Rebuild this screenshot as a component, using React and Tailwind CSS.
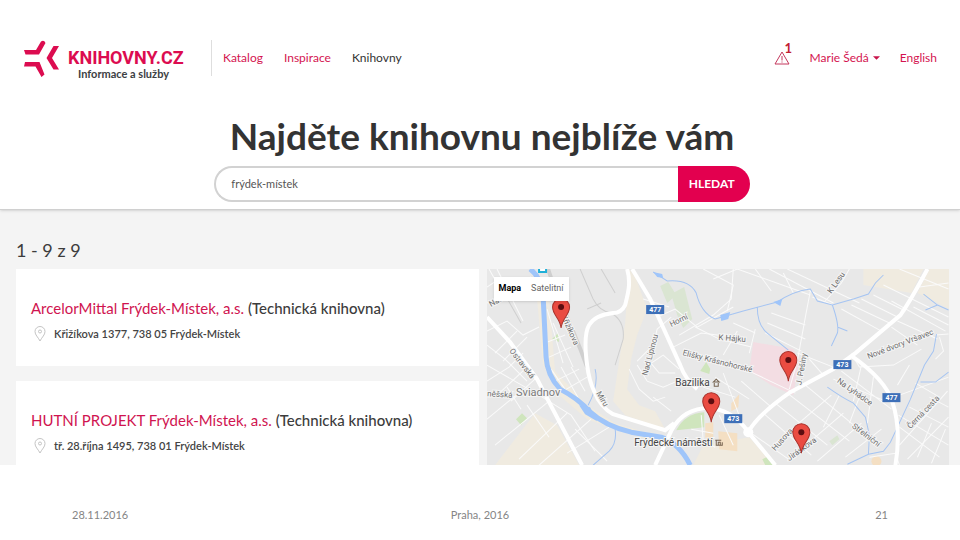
import React, { useState } from "react";

const libraries = [
  {
    name: "ArcelorMittal Frýdek-Místek, a.s.",
    type: "(Technická knihovna)",
    address: "Křižíkova 1377, 738 05 Frýdek-Místek",
  },
  {
    name: "HUTNÍ PROJEKT Frýdek-Místek, a.s.",
    type: "(Technická knihovna)",
    address: "tř. 28.října 1495, 738 01 Frýdek-Místek",
  },
];

// street grid, thin white lines
const streets = [
  "M0 18 L12 10 M2 0 L20 32 M10 0 L36 52 M0 34 L44 8",
  "M0 62 L20 52 L36 66 L52 58 M8 84 L30 62 M16 92 L40 68",
  "M0 76 L18 90 L40 112 M0 96 L52 126 L84 146 L108 182",
  "M0 112 L22 98 L36 84 M8 128 L40 98 M24 132 L50 108",
  "M60 40 L76 94 M66 54 L86 98 M58 74 L78 66 M62 88 L84 78",
  "M64 100 L82 126 M74 98 L94 134 M84 98 L98 122 M68 112 L92 100 M76 122 L100 108",
  "M0 150 L34 122 M8 176 L62 132 M32 190 L80 144 M52 196 L104 150",
  "M20 118 L34 140 M40 136 L62 168 M88 160 L120 192 M80 184 L122 158",
  "M156 30 L182 38 M170 48 L188 40 L210 58 L246 38",
  "M150 92 L166 76 L170 60 L184 48 M158 98 L176 86 L192 100",
  "M142 100 L152 120 L166 132 L178 128 M150 96 L160 112 L176 118 L190 112",
  "M162 92 L172 104 L188 104 M166 128 L184 142",
  "M192 66 L226 46 L244 30 L246 0 M186 78 L214 64 L246 68",
  "M208 58 L232 70 L264 78 M200 84 L232 92 L262 102 L308 124",
  "M216 0 L246 16 L240 42 M226 10 L250 0 M250 0 L323 26",
  "M282 0 L346 34 M300 0 L372 34 M268 0 L284 22 M296 4 L306 24",
  "M323 22 L318 48 L310 92 L302 120 M336 34 L354 14 L362 0",
  "M325 28 L346 36 M284 44 L318 56 M280 54 L318 70 M278 64 L314 82",
  "M250 62 L236 86 M268 60 L262 84 M246 54 L268 64",
  "M354 40 L394 62 M364 36 L402 54 M374 30 L410 48 M386 26 L418 42",
  "M396 16 L461 48 M404 32 L458 62 M410 52 L450 70 M404 58 L430 76",
  "M412 0 L461 20 M432 18 L461 14 M426 38 L461 56",
  "M366 88 L372 98 L406 96 L434 80 M448 66 L461 65 M452 68 L456 82 L448 90",
  "M310 84 L346 98 M322 90 L336 106 M254 112 L284 138",
  "M228 108 L262 130 M236 104 L254 152 M216 118 L248 128",
  "M276 144 L324 186 M288 134 L340 176 M300 124 L362 172 M318 116 L376 164",
  "M264 164 L304 192 M300 192 L356 144 M286 176 L344 126 M330 192 L374 154",
  "M346 110 L398 132 M354 102 L404 140 M372 128 L362 154",
  "M374 96 L366 132 M386 108 L380 154 M352 126 L336 158",
  "M410 116 L422 96 M412 126 L461 108 M412 176 L460 122 M420 190 L461 148",
  "M411 146 L461 176 M412 158 L452 188 M422 138 L461 158 M442 128 L461 138",
  "M428 114 L452 128 M430 188 L444 154 M444 194 L458 160",
  "M382 188 L408 184 L412 196 M358 188 L394 160",
  "M214 146 L216 172 L228 178 M232 146 L246 176 M204 160 L226 164",
];

const mainRoads = [
  "M140 0 C144 14 141 24 138 36 Q134 44 126 44 Q108 46 102 56 Q96 66 100 96 Q102 112 107 122 Q113 138 126 145 L178 161 L187 154",
  "M145 0 L163 30 L193 96 Q198 110 210 120",
  "M0 48 L23 73 L50 110 L95 196",
  "M168 196 L182 166 Q192 142 216 139 Q244 138 261 163 L288 196",
  "M261 163 Q270 146 303 123 L346 100 L368 84 L413 46 Q424 30 440 0",
  "M363 86 Q398 110 405 133 Q414 160 408 196",
];

const streams = [
  "M166 3 L180 12 Q202 10 209 24 Q214 44 228 50 L242 46 L256 42 L290 33 Q306 22 323 20 L330 32 L345 36 L366 30 L381 25 L388 14 L396 6",
  "M345 36 Q352 56 350 64 L344 77 M350 58 L360 62",
  "M270 38 Q270 56 280 64 L301 81",
  "M436 25 L450 36 L461 41 M450 36 L438 41",
  "M449 65 L446 82 L437 96 L423 130 L403 173 L396 182 L381 185 L360 195",
  "M340 118 Q354 128 366 134 L378 148 L382 166 L381 185",
  "M433 113 L448 113 L461 103",
  "M128 160 Q130 174 122 182 L106 196 M108 100 Q112 116 101 136",
];

const labels = [
  { text: "Nasl.", x: 4, y: 38, rotate: -30 },
  { text: "Ostravská", x: 22, y: 82, rotate: 52 },
  { text: "Křižíkova", x: 74, y: 47, rotate: 66 },
  { text: "Nad Lipinou", x: 160, y: 107, rotate: -75 },
  { text: "Horní", x: 184, y: 58, rotate: -26 },
  { text: "Elišky Krásnohorské", x: 195, y: 86, rotate: 14 },
  { text: "K Hájku", x: 231, y: 71, rotate: 4 },
  { text: "K Lesu", x: 344, y: 25, rotate: -55 },
  { text: "Nové dvory Vršavec", x: 381, y: 90, rotate: -21 },
  { text: "J. Pešiny", x: 314, y: 116, rotate: -80 },
  { text: "Na Lyhádce", x: 349, y: 113, rotate: 35 },
  { text: "Černá cesta", x: 423, y: 160, rotate: -46 },
  { text: "Střelniční", x: 364, y: 158, rotate: 37 },
  { text: "Husova", x: 288, y: 182, rotate: -48 },
  { text: "Jiráskova", x: 302, y: 192, rotate: -36 },
  { text: "Míru", x: 109, y: 124, rotate: 60 },
  { text: "něšská", x: 0, y: 127, rotate: 4 },
];

const shields = [
  { text: "477", x: 168, y: 41 },
  { text: "473", x: 355, y: 96 },
  { text: "477", x: 404, y: 129 },
  { text: "473", x: 246, y: 150 },
];

const markers = [
  { x: 74, y: 59 },
  { x: 301, y: 112 },
  { x: 224, y: 153 },
  { x: 314, y: 184 },
];

const LogoMark = () => (
  <svg viewBox="0 0 36 38" className="h-[38px] w-9 shrink-0" fill="#dc0c50">
    <path d="M17 1.500 Q20 -0.500 21.500 3 L15 14.500 L1.500 14.500 L0 10 L12 10 Z" />
    <path d="M1 22 L15.500 22 L20.500 34.500 L17.500 37 L11.500 26.500 L0 26.500 Z" />
    <path d="M29.500 6 L35 6 L28 18 L35 29.500 L29.500 29.500 L22.500 18 Z" />
  </svg>
);

const PinIcon = () => (
  <svg
    viewBox="0 0 12 16"
    className="h-4 w-3 shrink-0"
    fill="none"
    stroke="#c4c4c4"
  >
    <path d="M6 15 C4 11 1 9 1 5.500 A5 5 0 0 1 11 5.500 C11 9 8 11 6 15 Z" />
    <circle cx="6" cy="5.500" r="1.500" />
  </svg>
);

const NavBar = () => (
  <header className="flex h-[76px] items-end pr-[23px] pl-6">
    <a href="#home" className="flex h-9 w-[187px] items-start">
      <LogoMark />
      <span className="flex flex-col pt-2 pl-2">
        <span className="font-['Roboto',sans-serif] text-lg leading-5 font-bold text-[#dc0c50]">
          KNIHOVNY.CZ
        </span>
        <span className="pl-[10px] text-[11px] leading-3 font-bold whitespace-nowrap text-[#3c4043]">
          Informace a služby
        </span>
      </span>
    </a>
    <nav className="flex h-9 items-center gap-[21px] border-l border-[#dedede] pl-[11px] text-xs text-[#d41450]">
      <a href="#katalog">Katalog</a>
      <a href="#inspirace">Inspirace</a>
      <a href="#knihovny" className="text-[#333]">
        Knihovny
      </a>
    </nav>
    <div className="ml-auto flex h-9 items-center gap-5 text-xs text-[#d41450]">
      <a href="#upozorneni" className="relative" aria-label="Upozornění">
        <svg
          viewBox="0 0 16 14"
          className="h-[14px] w-4"
          fill="none"
          stroke="#c4375c"
          strokeWidth="1"
        >
          <path d="M8 1 L15 13 L1 13 Z M8 5 L8 9.500 M8 10.500 L8 11.500" />
        </svg>
        <span className="absolute -top-[9px] left-[11px] text-[13px] leading-3 font-bold text-[#c22032]">
          1
        </span>
      </a>
      <button type="button" className="flex items-center gap-1">
        Marie Šedá
        <svg viewBox="0 0 8 4" className="h-1 w-[7px]" fill="#c8144b">
          <path d="M0 0 L8 0 L4 4 Z" />
        </svg>
      </button>
      <a href="#english">English</a>
    </div>
  </header>
);

const LibraryCard = ({ library }) => (
  <li className="h-[97px] bg-white pt-[29px] pl-[15px]">
    <h2 className="text-[15px] leading-5 font-medium text-[#3c3c3c]">
      <a href="#knihovna" className="font-normal text-[#d01450]">
        {library.name}
      </a>{" "}
      {library.type}
    </h2>
    <p className="mt-2 flex items-center gap-2 pl-[3px] text-[11px] leading-4 font-semibold text-[#444]">
      <PinIcon />
      {library.address}
    </p>
  </li>
);

const LibraryMap = () => (
  <svg
    viewBox="0 0 462 196"
    preserveAspectRatio="xMidYMin slice"
    className="h-full w-full font-['Roboto',sans-serif]"
  >
    <rect width="462" height="196" fill="#e8e8e8" />
    <g fill="#f0ebe0">
      <path d="M142 0 L149 10 L160 40 L150 66 L144 90 L140 120 L152 136 L168 142 L178 160 L138 146 L126 132 L132 92 L138 54 Z" />
      <path d="M376 0 L436 0 L424 24 L376 16 Z M442 0 L462 0 L462 40 L430 24 Z" />
      <path d="M8 196 L48 144 L70 156 L92 196 Z" />
      <path d="M50 30 L56 96 L72 126 L100 150 L176 176 L182 170 L128 154 L100 136 L68 102 L62 30 Z" />
      <path d="M216 176 L262 168 L286 196 L206 196 Z" />
    </g>
    <path
      d="M266 73 L306 80 L312 92 L306 126 L284 116 L262 102 Z"
      fill="#f3dde3"
    />
    <g fill="#cfe5bd">
      <path
        d="M173 17 L181 13 L189 26 L180 34 Z M184 25 L197 18 L205 50 L196 59 L190 46 Z"
        fill="#dae5d2"
      />
      <path d="M189 161 Q198 144 217 143 L217 158 Z" />
      <path d="M29 150 L35 144 L40 149 L34 156 Z M275 190 L281 187 L288 196 L278 196 Z" />
      <path d="M213 102 L219 93 L223 100 L222 105 Z M65 70 L71 64 L72 73 Z" />
      <path d="M342 172 L350 166 L352 170 L345 176 Z" fill="#dae5d2" />
    </g>
    <g fill="#f4dfc3">
      <path d="M218 154 L226 153 L226 176 L218 168 Z M231 162 L250 164 L250 182 L232 180 Z" />
      <path d="M244 134 L252 125 L251 138 L244 142 Z" />
      <circle cx="389" cy="192" r="5" />
    </g>
    <g fill="none" stroke="#fafafa">
      {streets.map((d) => (
        <path key={d} d={d} />
      ))}
    </g>
    <g fill="none" stroke="#cfcfcf">
      <path d="M61 0 Q68 22 76 38 L94 82 L100 98" strokeWidth="4" />
      <path d="M93 0 L106 30 Q112 42 124 44 Q138 52 136 70 L128 96 M100 40 L114 34 M114 0 L128 24 M8 8 L34 54" />
    </g>
    <g fill="none" stroke="#a5c4f2">
      {streams.map((d) => (
        <path key={d} d={d} />
      ))}
      <path
        d="M43 0 Q54 8 56 26 L59 88 Q60 106 73 120 Q92 130 102 142 Q118 157 144 163 L174 168 Q192 174 203 196"
        stroke="#9fc5fa"
        strokeWidth="5"
      />
    </g>
    <g fill="#9fc5fa">
      <path d="M166 3 L175 5 L176 9 L170 8 Z M233 46 L243 43 L241 50 L234 52 Z M286 33 L295 30 L293 37 Z" />
      <path d="M92 136 L103 138 L110 152 L98 145 Z" />
    </g>
    <g fill="none" stroke="#ffffff" strokeWidth="4">
      {mainRoads.map((d) => (
        <path key={d} d={d} />
      ))}
    </g>
    <circle cx="261" cy="163" r="5" fill="#ffffff" />
    <path d="M52 0 V3 H59 V0" fill="#ffffff" stroke="#20b0d8" strokeWidth="2" />

    <g
      fill="#6e6e6e"
      fontSize="8"
      stroke="#f5f5f5"
      strokeWidth="2"
      paintOrder="stroke"
    >
      {labels.map(({ text, x, y, rotate }) => (
        <text key={text} transform={`translate(${x} ${y}) rotate(${rotate})`}>
          {text}
        </text>
      ))}
    </g>
    <g stroke="#f5f5f5" strokeWidth="2" paintOrder="stroke">
      <text x="29" y="127" fontSize="11" fill="#7a7a7a">
        Sviadnov
      </text>
      <text x="188" y="117" fontSize="10" fill="#444444">
        Bazilika
      </text>
      <text x="147" y="177" fontSize="10" fill="#444444">
        Frýdecké náměstí
      </text>
    </g>
    <g fill="none" stroke="#75624f">
      <path d="M226 113 L229 110 L232 113 Z M227 114 V117 H231 V114" />
      <path d="M228 171 H234 M229 171 V176 H235 V173 M231 176 V173 H233 V176" />
    </g>
    {shields.map(({ text, x, y }) => (
      <g key={`${x}-${y}`}>
        <rect x={x - 9} y={y - 5} width="18" height="9" fill="#3d6fb8" />
        <text
          x={x}
          y={y + 2}
          fontSize="7"
          fontWeight="700"
          fill="#ffffff"
          textAnchor="middle"
        >
          {text}
        </text>
      </g>
    ))}
    {markers.map(({ x, y }) => (
      <g key={`${x}-${y}`} transform={`translate(${x} ${y})`}>
        <path
          d="M0 0 C-1 -10 -8.500 -13 -8.500 -21 A8.500 8.500 0 0 1 8.500 -21 C8.500 -13 1 -10 0 0 Z"
          fill="#ea4c42"
          stroke="#a8322c"
        />
        <circle cy="-21" r="3" fill="#5c0d10" />
      </g>
    ))}
  </svg>
);

export default function App() {
  const [query, setQuery] = useState("frýdek-místek");

  return (
    <div className="min-h-screen bg-white font-['Lato',sans-serif]">
      <div className="relative h-[210px] border-b border-[#d0d0d0] bg-white shadow-sm">
        <NavBar />
        <div className="pt-9 pl-1">
          <h1 className="text-center text-[37px] leading-12 font-bold text-[#333]">
            Najděte knihovnu nejblíže vám
          </h1>
          <form
            className="mx-auto mt-[6px] flex h-9 w-[56%]"
            onSubmit={(e) => e.preventDefault()}
          >
            <input
              type="text"
              aria-label="Hledat knihovnu"
              value={query}
              onChange={(e) => setQuery(e.target.value)}
              className="min-w-0 flex-1 rounded-l-full border-2 border-r-0 border-[#d2d2d2] pl-[15px] text-[11px] text-[#555] outline-none"
            />
            <button
              type="submit"
              className="w-[72px] rounded-r-full bg-[#e3004f] pr-1 text-xs font-bold text-white"
            >
              HLEDAT
            </button>
          </form>
        </div>
      </div>

      <main className="bg-[#f4f4f4] pr-[11px] pl-4">
        <p className="pt-7 pb-[7px] text-lg leading-6 text-[#3c3c3c]">
          1 - 9 z 9
        </p>
        <div className="grid h-[196px] grid-cols-2 gap-2 overflow-hidden">
          <ul className="flex flex-col gap-[15px]">
            {libraries.map((library) => (
              <LibraryCard key={library.name} library={library} />
            ))}
          </ul>
          <div className="relative h-[196px]">
            <LibraryMap />
            <div className="absolute top-2 left-[7px] flex h-6 items-center bg-white font-['Roboto',sans-serif] text-[9px] shadow">
              <button type="button" className="px-[5px] font-bold text-black">
                Mapa
              </button>
              <button type="button" className="px-[5px] text-[#666]">
                Satelitní
              </button>
            </div>
          </div>
        </div>
      </main>

      <footer className="grid grid-cols-3 px-[72px] pt-[42px] text-[11px] leading-4 text-[#858585]">
        <span>28.11.2016</span>
        <span className="text-center">Praha, 2016</span>
        <span className="text-right">21</span>
      </footer>
    </div>
  );
}
